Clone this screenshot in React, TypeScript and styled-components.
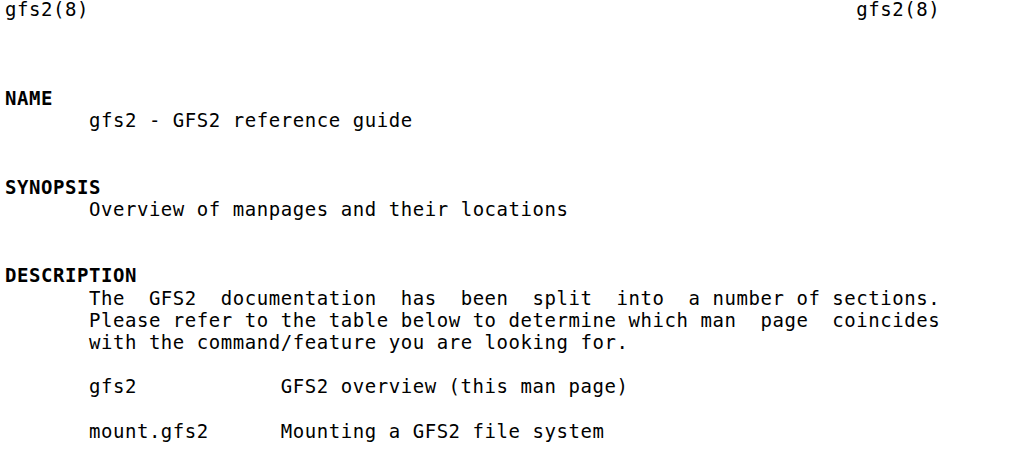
import React from "react";
import styled, { createGlobalStyle } from "styled-components";

const CHAR = 11.99;
const LINE = 22.2;

const Global = createGlobalStyle`
  html, body { margin: 0; padding: 0; background: #ffffff; }
  body {
    font-family: "DejaVu Sans Mono", "Liberation Mono", monospace;
    font-size: 19px;
    letter-spacing: ${CHAR - 19 * 0.602}px;
    line-height: ${LINE}px;
    color: #000000;
  }
`;

const Page = styled.main`
  display: flex;
  flex-direction: column;
  width: ${CHAR * 78}px;
  padding: 0 0 0 5px;
  margin-top: -2px;
  white-space: pre;
`;

const Header = styled.header`
  display: flex;
  justify-content: space-between;
  margin-bottom: ${LINE * 3}px;
`;

const Section = styled.section`
  display: flex;
  flex-direction: column;
  margin-bottom: ${LINE * 2}px;
`;

const Heading = styled.h2`
  margin: 0;
  font-size: inherit;
  font-weight: bold;
`;

const Body = styled.div`
  display: flex;
  flex-direction: column;
  gap: ${LINE}px;
  padding-left: ${CHAR * 7}px;
`;

const Paragraph = styled.p`
  margin: 0;
  display: flex;
  flex-direction: column;
`;

const Row = styled.div`
  display: grid;
  grid-template-columns: ${CHAR * 16}px auto;
`;

const rows = [
  ["gfs2", "GFS2 overview (this man page)"],
  ["mount.gfs2", "Mounting a GFS2 file system"],
];

export default function App() {
  return (
    <>
      <Global />
      <Page>
        <Header>
          <span>gfs2(8)</span>
          <span>gfs2(8)</span>
        </Header>
        <Section>
          <Heading>NAME</Heading>
          <Body>
            <Paragraph>
              <span>gfs2 - GFS2 reference guide</span>
            </Paragraph>
          </Body>
        </Section>
        <Section>
          <Heading>SYNOPSIS</Heading>
          <Body>
            <Paragraph>
              <span>Overview of manpages and their locations</span>
            </Paragraph>
          </Body>
        </Section>
        <Section>
          <Heading>DESCRIPTION</Heading>
          <Body>
            <Paragraph>
              <span>{"The  GFS2  documentation  has  been  split  into  a number of sections."}</span>
              <span>{"Please refer to the table below to determine which man  page  coincides"}</span>
              <span>with the command/feature you are looking for.</span>
            </Paragraph>
            {rows.map(([cmd, desc]) => (
              <Row key={cmd}>
                <span>{cmd}</span>
                <span>{desc}</span>
              </Row>
            ))}
          </Body>
        </Section>
      </Page>
    </>
  );
}
